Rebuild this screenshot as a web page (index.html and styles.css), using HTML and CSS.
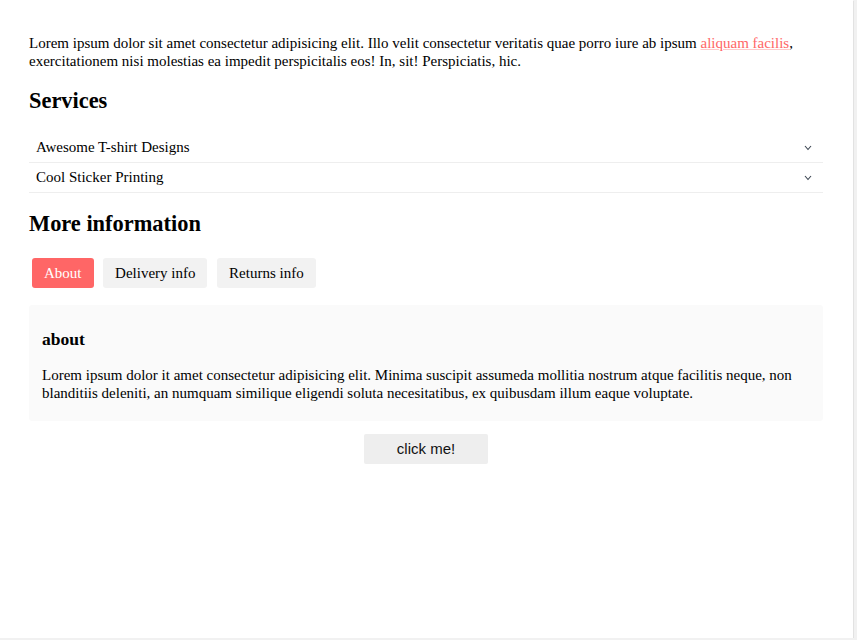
FILE: index.html
```html
<!DOCTYPE html>
<html lang="en">
<head>
<meta charset="utf-8">
<title>Services</title>
<link rel="stylesheet" href="styles.css">
</head>
<body>
<div class="frame">
  <main class="content">
    <p class="intro">Lorem ipsum dolor sit amet consectetur adipisicing elit. Illo velit consectetur veritatis quae porro iure ab ipsum <a href="#" class="link">aliquam facilis</a>, exercitationem nisi molestias ea impedit perspicitalis eos! In, sit! Perspiciatis, hic.</p>

    <h2 class="heading">Services</h2>
    <div class="accordion">
      <div class="acc-item">
        <span>Awesome T-shirt Designs</span>
        <svg class="chev" width="8" height="6" viewBox="0 0 8 6"><polyline points="1,1 4,4.5 7,1" fill="none" stroke="#3a4450" stroke-width="1.1"/></svg>
      </div>
      <div class="acc-item">
        <span>Cool Sticker Printing</span>
        <svg class="chev" width="8" height="6" viewBox="0 0 8 6"><polyline points="1,1 4,4.5 7,1" fill="none" stroke="#3a4450" stroke-width="1.1"/></svg>
      </div>
    </div>

    <h2 class="heading">More information</h2>
    <div class="tabs">
      <button class="tab active">About</button>
      <button class="tab">Delivery info</button>
      <button class="tab">Returns info</button>
    </div>
    <section class="panel">
      <h3 class="panel-title">about</h3>
      <p class="panel-text">Lorem ipsum dolor it amet consectetur adipisicing elit. Minima suscipit assumeda mollitia nostrum atque facilitis neque, non blanditiis deleniti, an numquam similique eligendi soluta necesitatibus, ex quibusdam illum eaque voluptate.</p>
    </section>
    <div class="actions">
      <button class="click-btn">click me!</button>
    </div>
  </main>
</div>
</body>
</html>
```

FILE: styles.css
```css
html {
  background: #f1f1f1;
}
body {
  margin: 0;
  font-family: "Liberation Serif", "Times New Roman", serif;
  font-size: 15px;
  color: #000;
}
.frame {
  width: 853px;
  height: 638px;
  background: #fff;
  box-shadow: 1px 1px 0 #e2e2e2;
  box-sizing: border-box;
  padding: 18px 30px 0 29px;
  overflow: hidden;
}
.intro {
  margin: 16px 0;
  line-height: 18px;
}
.link {
  color: #ff6666;
  text-decoration: underline;
  text-decoration-color: rgba(255, 102, 102, 0.35);
}
.heading {
  font-size: 22.4px;
  font-weight: bold;
  margin: 18px 0 19.3px;
  line-height: 25.7px;
}
.accordion {
  display: flex;
  flex-direction: column;
}
.acc-item {
  display: flex;
  align-items: center;
  justify-content: space-between;
  padding: 5px 11px 5px 7px;
  line-height: 19px;
  border-bottom: 1px solid #eeeeee;
}
.chev {
  display: block;
  margin-top: 1px;
}
.tabs {
  display: flex;
  gap: 9.6px;
  padding: 2px 3px 0;
}
.tab {
  font-family: "Liberation Serif", "Times New Roman", serif;
  font-size: 15px;
  height: 30px;
  padding: 1px 12px 0;
  border: none;
  border-radius: 3px;
  background: #f2f2f2;
  color: #000;
}
.tab.active {
  background: #ff6666;
  color: #fff;
}
.panel {
  margin-top: 17px;
  background: #fafafa;
  border-radius: 3px;
  padding: 6px 13px 4px;
}
.panel-title {
  font-size: 17.5px;
  line-height: 20px;
  margin: 18px 0 18.4px;
}
.panel-text {
  margin: 15px 0;
  line-height: 17.25px;
}
.actions {
  display: flex;
  justify-content: center;
  margin-top: 13px;
}
.click-btn {
  width: 124px;
  height: 30px;
  border: none;
  border-radius: 2px;
  background: #eeeeee;
  font-family: "Liberation Sans", Arial, sans-serif;
  font-size: 15px;
  color: #111;
}
```
